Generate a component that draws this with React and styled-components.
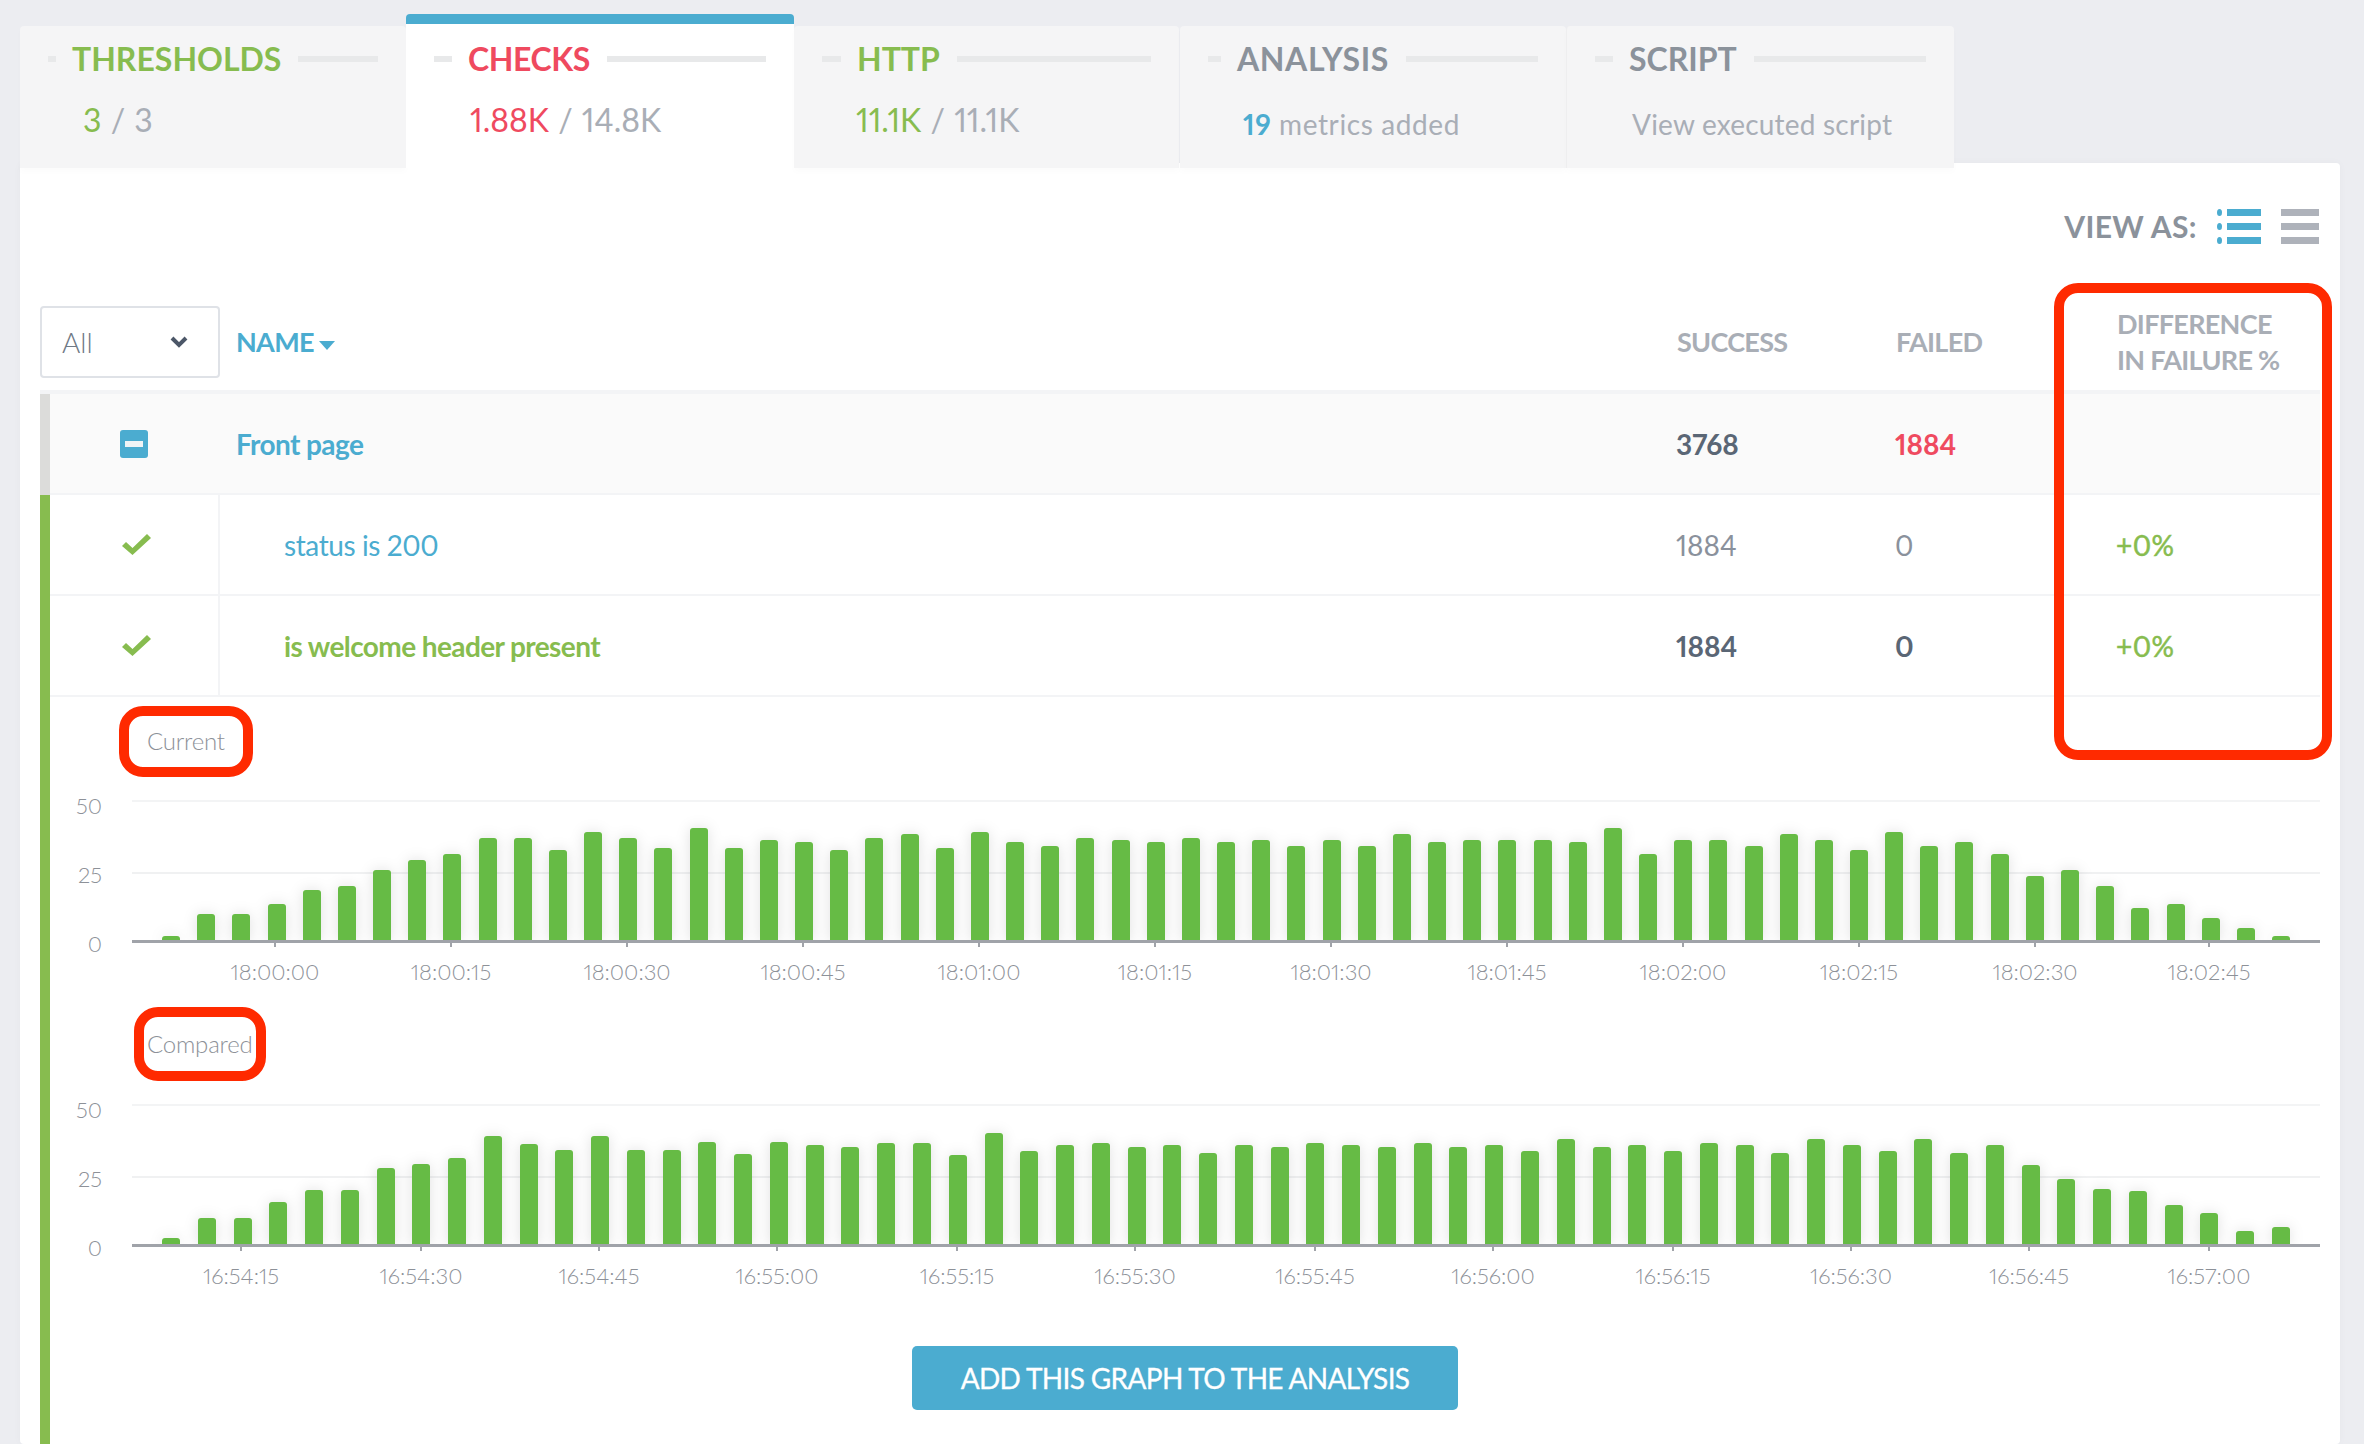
import React from "react";
import styled, { createGlobalStyle } from "styled-components";

const GREEN = "#87bc4f";
const RED = "#ef4a5f";
const BLUE = "#4bacd0";
const GREY = "#a9aeb6";
const SLATE = "#5a6675";

const GlobalStyle = createGlobalStyle`
  html, body {
    margin: 0;
    padding: 0;
    background: #ecedf1;
  }
  body {
    font-family: "Lato", "Liberation Sans", sans-serif;
    font-variant-numeric: proportional-nums;
    font-feature-settings: "pnum" 1;
  }
`;

const Page = styled.div`
  width: 2364px;
  height: 1444px;
  box-sizing: border-box;
  padding: 14px 24px 0 20px;
  display: flex;
  flex-direction: column;
  overflow: hidden;
`;

const Tabs = styled.div`
  display: flex;
  align-items: flex-end;
  position: relative;
  z-index: 1;
`;

const Tab = styled.div`
  width: ${(p) => p.$width}px;
  margin-right: ${(p) => p.$gap || 0}px;
  height: ${(p) => (p.$active ? 154 : 142)}px;
  box-sizing: border-box;
  padding: ${(p) => (p.$active ? 15 : 13)}px 28px 0;
  background: ${(p) => (p.$active ? "#fff" : "#f5f5f6")};
  border-top: ${(p) => (p.$active ? `10px solid ${BLUE}` : "0")};
  border-left: ${(p) => (p.$divider ? "1px solid #eeeeef" : "0")};
  border-radius: 4px 4px 0 0;
  box-shadow: ${(p) => (p.$active ? "none" : "0 4px 6px rgba(0, 0, 0, 0.015)")};
`;

const TabHead = styled.div`
  display: flex;
  align-items: center;
  height: 40px;
`;

const Dash = styled.span`
  width: ${(p) => p.$width}px;
  height: 6px;
  margin-right: 16px;
  background: #e8e9ea;
`;

const TabLine = styled.span`
  flex: 1;
  height: 6px;
  margin-left: 17px;
  background: #e8e9ea;
`;

const TabTitle = styled.span`
  font-size: 32px;
  line-height: 40px;
  font-weight: 700;
  letter-spacing: ${(p) => p.$spacing || 0}px;
  color: ${(p) => p.$color};
`;

const TabValue = styled.div`
  margin: ${(p) => (p.$small ? 27 : 23)}px 0 0 ${(p) => p.$indent}px;
  font-size: ${(p) => (p.$small ? 28 : 32)}px;
  line-height: 36px;
  letter-spacing: ${(p) => p.$spacing || 0}px;
  word-spacing: ${(p) => (p.$small ? 0 : 1)}px;
  color: ${GREY};
  white-space: nowrap;
`;

const Strong = styled.span`
  color: ${(p) => p.$color};
  font-weight: ${(p) => p.$weight || 400};
`;

const Panel = styled.div`
  flex: 1;
  margin-top: -5px;
  position: relative;
  display: flex;
  flex-direction: column;
  background: #fff;
  border-radius: 4px;
  box-shadow: 0 0 8px rgba(0, 0, 0, 0.03);
`;

const Toolbar = styled.div`
  height: 143px;
  box-sizing: border-box;
  padding: 0 21px 17px 0;
  display: flex;
  align-items: center;
  justify-content: flex-end;
  gap: 20px;
`;

const ViewLabel = styled.span`
  font-size: 30px;
  font-weight: 700;
  letter-spacing: 0.4px;
  color: #8b929b;
`;

const Table = styled.div`
  flex: 1;
  margin: 0 20px;
  display: flex;
  flex-direction: column;
`;

const HeaderRow = styled.div`
  display: grid;
  grid-template-columns: 178px 1459px 219px 221px 203px;
  align-items: center;
  height: 88px;
  box-sizing: border-box;
  padding-bottom: 12px;
  border-bottom: 4px solid #f3f4f6;
`;

const SelectBox = styled.div`
  width: 180px;
  height: 72px;
  box-sizing: border-box;
  padding: 0 30px 0 20px;
  border: 2px solid #dfe2e7;
  border-radius: 4px;
  display: flex;
  align-items: center;
  justify-content: space-between;
  font-size: 28px;
  font-weight: 300;
  color: #6f7986;
`;

const HeadCell = styled.div`
  font-size: 27px;
  line-height: 36px;
  font-weight: 700;
  letter-spacing: -0.7px;
  color: ${GREY};
  white-space: nowrap;
`;

const NameHead = styled(HeadCell)`
  color: ${BLUE};
  padding-left: 18px;
  display: flex;
  align-items: center;
`;

const SortArrow = styled.span`
  width: 0;
  height: 0;
  margin: 6px 0 0 5px;
  border-left: 8px solid transparent;
  border-right: 8px solid transparent;
  border-top: 9px solid ${BLUE};
`;

const Row = styled.div`
  display: grid;
  grid-template-columns: 168px 1459px 219px 221px 203px;
  height: 101px;
  box-sizing: border-box;
  align-items: center;
  border-bottom: 2px solid #f3f4f6;
  background: ${(p) => (p.$group ? "#fafafa" : "#fff")};
`;

const GroupWrap = styled.div`
  border-left: 10px solid #dcdcda;
`;

const Details = styled.div`
  flex: 1;
  border-left: 10px solid ${GREEN};
  display: flex;
  flex-direction: column;
`;

const IconCell = styled.div`
  display: flex;
  justify-content: center;
  padding-left: ${(p) => p.$shift || 0}px;
`;

const MinusBox = styled.span`
  width: 28px;
  height: 28px;
  border-radius: 3px;
  background: ${BLUE};
  display: flex;
  align-items: center;
  justify-content: center;
  &::after {
    content: "";
    width: 18px;
    height: 6px;
    background: #f0f4f6;
  }
`;

const NameCell = styled.div`
  align-self: stretch;
  display: flex;
  align-items: center;
  box-sizing: border-box;
  padding-left: ${(p) => (p.$child ? 64 : 18)}px;
  border-left: ${(p) => (p.$child ? "2px solid #f3f4f6" : "0")};
  font-size: 28px;
  font-weight: ${(p) => (p.$bold ? 700 : 400)};
  letter-spacing: ${(p) => (p.$bold ? -0.6 : -0.4)}px;
  color: ${(p) => p.$color};
`;

const ValueCell = styled.div`
  font-size: 28px;
  font-weight: ${(p) => (p.$bold ? 700 : 400)};
  margin-left: -1px;
  color: ${(p) => p.$color};
`;

const DiffCell = styled(ValueCell)`
  color: ${GREEN};
  letter-spacing: 0.4px;
  -webkit-text-stroke: 0.5px ${GREEN};
`;

const LabelBox = styled.div`
  align-self: flex-start;
  width: ${(p) => p.$width}px;
  height: ${(p) => p.$height}px;
  box-sizing: border-box;
  margin: ${(p) => p.$top}px 0 14px ${(p) => p.$left}px;
  padding: 0 0 2px ${(p) => p.$pad}px;
  border: 10px solid #ff2a00;
  border-radius: 24px;
  display: flex;
  align-items: center;
  font-size: 24px;
  font-weight: 300;
  letter-spacing: -0.2px;
  color: #8d9198;
`;

const ChartSvg = styled.svg`
  display: block;
  flex: none;
  text {
    font-family: "Lato", "Liberation Sans", sans-serif;
    font-size: 22px;
    font-weight: 300;
    fill: #8d9198;
  }
`;

const AddButton = styled.button`
  align-self: center;
  width: 546px;
  height: 64px;
  margin-top: 51px;
  border: 0;
  border-radius: 5px;
  background: ${BLUE};
  color: #fff;
  font-family: inherit;
  font-size: 28px;
  font-weight: 400;
  letter-spacing: -0.65px;
  -webkit-text-stroke: 0.3px #fff;
`;

const Highlight = styled.div`
  position: absolute;
  left: 2034px;
  top: 120px;
  width: 278px;
  height: 477px;
  box-sizing: border-box;
  border: 10px solid #ff2a00;
  border-radius: 24px;
  pointer-events: none;
`;

const currentHeights = [
  5, 27, 27, 37, 51, 55, 71, 81, 87, 103, 103, 91, 109, 103, 93, 113, 93, 101, 99, 91, 103, 107, 93, 109, 99, 95, 103, 101,
  99, 103, 99, 101, 95, 101, 95, 107, 99, 101, 101, 101, 99, 113, 87, 101, 101, 95, 107, 101, 91, 109, 95, 99, 87, 65, 71,
  55, 33, 37, 23, 13, 5,
];

const comparedHeights = [
  7, 27, 27, 43, 55, 55, 77, 81, 87, 109, 101, 95, 109, 95, 95, 103, 91, 103, 100, 98, 102, 102, 90, 112, 94, 100, 102, 98,
  100, 92, 100, 98, 102, 100, 98, 102, 98, 100, 94, 106, 98, 100, 94, 102, 100, 92, 106, 100, 94, 106, 92, 100, 80, 66, 56,
  54, 40, 32, 14, 18,
];

const currentTicks = [
  [275, "18:00:00"], [451, "18:00:15"], [627, "18:00:30"], [803, "18:00:45"],
  [979, "18:01:00"], [1155, "18:01:15"], [1331, "18:01:30"], [1507, "18:01:45"],
  [1683, "18:02:00"], [1859, "18:02:15"], [2035, "18:02:30"], [2209, "18:02:45"],
];

const comparedTicks = [
  [241, "16:54:15"], [421, "16:54:30"], [599, "16:54:45"], [777, "16:55:00"],
  [957, "16:55:15"], [1135, "16:55:30"], [1315, "16:55:45"], [1493, "16:56:00"],
  [1673, "16:56:15"], [1851, "16:56:30"], [2029, "16:56:45"], [2209, "16:57:00"],
];

// bar with rounded top corners, sitting on the axis
const barPath = (x, h) => {
  const r = Math.min(3, h);
  const base = 150;
  return `M${x} ${base}V${base - h + r}Q${x} ${base - h} ${x + r} ${base - h}H${x + 18 - r}Q${x + 18} ${base - h} ${x + 18} ${base - h + r}V${base}Z`;
};

const BarChart = ({ id, heights, ticks }) => {
  const step = 2110 / (heights.length - 1);
  return (
    <ChartSvg width="2270" height="200" viewBox="0 0 2270 200">
      <defs>
        <filter id={`${id}-shadow`} x="-5%" y="-30%" width="110%" height="160%">
          <feDropShadow dx="0" dy="0" stdDeviation="7" floodColor="#000" floodOpacity="0.12" />
        </filter>
        <clipPath id={`${id}-clip`}>
          <rect x="82" y="0" width="2188" height="150" />
        </clipPath>
      </defs>
      <rect x="82" y="9" width="2188" height="2" fill="#f3f4f5" />
      <rect x="82" y="81" width="2188" height="2" fill="#f0f1f2" />
      <g clipPath={`url(#${id}-clip)`}>
        <g filter={`url(#${id}-shadow)`}>
          {heights.map((h, i) => (
            <path key={i} d={barPath(Math.round(112 + i * step), h)} fill="#66bb44" />
          ))}
        </g>
      </g>
      <rect x="82" y="149" width="2188" height="3" fill="#a0a3a9" />
      <text x="52" y="14" textAnchor="end" dominantBaseline="central">50</text>
      <text x="52" y="83" textAnchor="end" dominantBaseline="central">25</text>
      <text x="52" y="152" textAnchor="end" dominantBaseline="central">0</text>
      {ticks.map(([x, label]) => (
        <g key={label}>
          <rect x={x - 51} y="152" width="2" height="4" fill="#a0a3a9" />
          <text x={x - 50} y="180" textAnchor="middle" dominantBaseline="central">{label}</text>
        </g>
      ))}
    </ChartSvg>
  );
};

const ListIcon = () => (
  <svg width="44" height="35" viewBox="0 0 44 35" fill={BLUE}>
    <ellipse cx="2.5" cy="3.5" rx="2.5" ry="3.5" />
    <rect x="10" y="0" width="34" height="7" />
    <ellipse cx="2.5" cy="17.5" rx="2.5" ry="3.5" />
    <rect x="10" y="14" width="34" height="7" />
    <ellipse cx="2.5" cy="31.5" rx="2.5" ry="3.5" />
    <rect x="10" y="28" width="34" height="7" />
  </svg>
);

const RowsIcon = () => (
  <svg width="38" height="35" viewBox="0 0 38 35" fill="#aeb2ba">
    <rect x="0" y="0" width="38" height="7" />
    <rect x="0" y="14" width="38" height="7" />
    <rect x="0" y="28" width="38" height="7" />
  </svg>
);

const CheckIcon = () => (
  <svg width="29" height="21" viewBox="0 0 29 21" fill={GREEN}>
    <path d="M0 12L4 8L10.5 14L25 0L29 4L10.5 21Z" />
  </svg>
);

const ChevronIcon = () => (
  <svg width="18" height="12" viewBox="0 0 18 12" fill="none" stroke="#4c5768" strokeWidth="4">
    <path d="M2 2L9 9L16 2" />
  </svg>
);

const App = () => (
  <Page>
    <GlobalStyle />
    <Tabs>
      <Tab $width={386}>
        <TabHead>
          <Dash $width={8} />
          <TabTitle $color={GREEN}>THRESHOLDS</TabTitle>
          <TabLine />
        </TabHead>
        <TabValue $indent={35}>
          <Strong $color={GREEN}>3</Strong> / 3
        </TabValue>
      </Tab>
      <Tab $width={388} $active>
        <TabHead>
          <Dash $width={18} />
          <TabTitle $color={RED} $spacing={-0.4}>CHECKS</TabTitle>
          <TabLine />
        </TabHead>
        <TabValue $indent={36}>
          <Strong $color={RED}>1.88K</Strong> / 14.8K
        </TabValue>
      </Tab>
      <Tab $width={385} $gap={1}>
        <TabHead>
          <Dash $width={19} />
          <TabTitle $color={GREEN}>HTTP</TabTitle>
          <TabLine />
        </TabHead>
        <TabValue $indent={34}>
          <Strong $color={GREEN}>11.1K</Strong> / 11.1K
        </TabValue>
      </Tab>
      <Tab $width={386}>
        <TabHead>
          <Dash $width={13} />
          <TabTitle $color="#8b929b" $spacing={0.6}>ANALYSIS</TabTitle>
          <TabLine />
        </TabHead>
        <TabValue $indent={35} $small $spacing={0.6}>
          <Strong $color={BLUE} $weight={700}>19</Strong> metrics added
        </TabValue>
      </Tab>
      <Tab $width={388} $divider>
        <TabHead>
          <Dash $width={18} />
          <TabTitle $color="#8b929b">SCRIPT</TabTitle>
          <TabLine />
        </TabHead>
        <TabValue $indent={37} $small $spacing={0.2}>
          View executed script
        </TabValue>
      </Tab>
    </Tabs>
    <Panel>
      <Toolbar>
        <ViewLabel>VIEW AS:</ViewLabel>
        <ListIcon />
        <RowsIcon />
      </Toolbar>
      <Table>
        <HeaderRow>
          <SelectBox>
            All
            <ChevronIcon />
          </SelectBox>
          <NameHead>
            NAME
            <SortArrow />
          </NameHead>
          <HeadCell>SUCCESS</HeadCell>
          <HeadCell>FAILED</HeadCell>
          <HeadCell>
            DIFFERENCE
            <br />
            IN FAILURE %
          </HeadCell>
        </HeaderRow>
        <GroupWrap>
          <Row $group>
            <IconCell>
              <MinusBox />
            </IconCell>
            <NameCell $color={BLUE} $bold>
              Front page
            </NameCell>
            <ValueCell $color={SLATE} $bold>
              3768
            </ValueCell>
            <ValueCell $color={RED} $bold>
              1884
            </ValueCell>
            <div />
          </Row>
        </GroupWrap>
        <Details>
          <Row>
            <IconCell $shift={4}>
              <CheckIcon />
            </IconCell>
            <NameCell $child $color={BLUE}>
              status is 200
            </NameCell>
            <ValueCell $color="#8a919c">1884</ValueCell>
            <ValueCell $color="#8a919c">0</ValueCell>
            <DiffCell>+0%</DiffCell>
          </Row>
          <Row>
            <IconCell $shift={4}>
              <CheckIcon />
            </IconCell>
            <NameCell $child $bold $color={GREEN}>
              is welcome header present
            </NameCell>
            <ValueCell $color={SLATE} $bold>
              1884
            </ValueCell>
            <ValueCell $color={SLATE} $bold>
              0
            </ValueCell>
            <DiffCell>+0%</DiffCell>
          </Row>
          <LabelBox $top={9} $left={69} $width={134} $height={71} $pad={18}>
            Current
          </LabelBox>
          <BarChart id="current" heights={currentHeights} ticks={currentTicks} />
          <LabelBox $top={16} $left={84} $width={132} $height={74} $pad={3}>
            Compared
          </LabelBox>
          <BarChart id="compared" heights={comparedHeights} ticks={comparedTicks} />
          <AddButton>ADD THIS GRAPH TO THE ANALYSIS</AddButton>
        </Details>
      </Table>
      <Highlight />
    </Panel>
  </Page>
);

export default App;
